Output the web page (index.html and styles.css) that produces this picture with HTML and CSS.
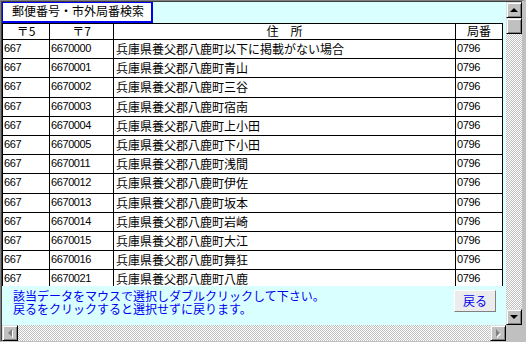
FILE: index.html
```html
<!DOCTYPE html>
<html lang="ja">
<head>
<meta charset="utf-8">
<title>郵便番号・市外局番検索</title>
<link rel="stylesheet" href="styles.css">
</head>
<body>
<div class="window">
  <div class="main">
    <div class="form">
      <div class="title">郵便番号・市外局番検索</div>
      <div class="list">
        <div class="row head">
          <div class="cell c">〒5</div><div class="cell c">〒7</div><div class="cell c">住　所</div><div class="cell c">局番</div>
        </div>
        <div class="row"><div class="cell num">667</div><div class="cell num">6670000</div><div class="cell">兵庫県養父郡八鹿町以下に掲載がない場合</div><div class="cell num">0796</div></div>
        <div class="row"><div class="cell num">667</div><div class="cell num">6670001</div><div class="cell">兵庫県養父郡八鹿町青山</div><div class="cell num">0796</div></div>
        <div class="row"><div class="cell num">667</div><div class="cell num">6670002</div><div class="cell">兵庫県養父郡八鹿町三谷</div><div class="cell num">0796</div></div>
        <div class="row"><div class="cell num">667</div><div class="cell num">6670003</div><div class="cell">兵庫県養父郡八鹿町宿南</div><div class="cell num">0796</div></div>
        <div class="row"><div class="cell num">667</div><div class="cell num">6670004</div><div class="cell">兵庫県養父郡八鹿町上小田</div><div class="cell num">0796</div></div>
        <div class="row"><div class="cell num">667</div><div class="cell num">6670005</div><div class="cell">兵庫県養父郡八鹿町下小田</div><div class="cell num">0796</div></div>
        <div class="row"><div class="cell num">667</div><div class="cell num">6670011</div><div class="cell">兵庫県養父郡八鹿町浅間</div><div class="cell num">0796</div></div>
        <div class="row"><div class="cell num">667</div><div class="cell num">6670012</div><div class="cell">兵庫県養父郡八鹿町伊佐</div><div class="cell num">0796</div></div>
        <div class="row"><div class="cell num">667</div><div class="cell num">6670013</div><div class="cell">兵庫県養父郡八鹿町坂本</div><div class="cell num">0796</div></div>
        <div class="row"><div class="cell num">667</div><div class="cell num">6670014</div><div class="cell">兵庫県養父郡八鹿町岩崎</div><div class="cell num">0796</div></div>
        <div class="row"><div class="cell num">667</div><div class="cell num">6670015</div><div class="cell">兵庫県養父郡八鹿町大江</div><div class="cell num">0796</div></div>
        <div class="row"><div class="cell num">667</div><div class="cell num">6670016</div><div class="cell">兵庫県養父郡八鹿町舞狂</div><div class="cell num">0796</div></div>
        <div class="row"><div class="cell num">667</div><div class="cell num">6670021</div><div class="cell">兵庫県養父郡八鹿町八鹿</div><div class="cell num">0796</div></div>
      </div>
      <div class="footer">
        <div class="msg">該当データをマウスで選択しダブルクリックして下さい。<br>戻るをクリックすると選択せずに戻ります。</div>
        <button class="back" type="button">戻る</button>
      </div>
    </div>
    <div class="vscroll">
      <div class="sbtn"><span class="tri up"></span></div>
      <div class="thumb"></div>
      <div class="track"></div>
      <div class="sbtn"><span class="tri down"></span></div>
    </div>
  </div>
  <div class="hbar">
    <div class="sbtn"><span class="tri left"></span></div>
    <div class="track"></div>
    <div class="sbtn"><span class="tri right"></span></div>
    <div class="corner"></div>
  </div>
</div>
</body>
</html>
```

FILE: styles.css
```css
* { box-sizing: border-box; }
html, body { margin: 0; padding: 0; }
body {
  width: 526px;
  height: 342px;
  overflow: hidden;
  background: #c0c0c0;
  font-family: "Noto Sans CJK JP", "Liberation Sans", sans-serif;
  font-size: 12px;
}
.window {
  width: 526px;
  height: 342px;
  display: flex;
  flex-direction: column;
  border-top: 1px solid #808080;
  border-left: 1px solid #808080;
  border-right: 4px solid #c0c0c0;
  border-bottom: 1px solid #c0c0c0;
  box-shadow: inset 1px 1px 0 #404040;
  padding: 1px 0 0 1px;
}
.main {
  display: flex;
  height: 323px;
}
.form {
  width: 504px;
  background: #daffff;
  display: flex;
  flex-direction: column;
  overflow: hidden;
}
.title {
  width: 151px;
  height: 21px;
  flex: none;
  background: #fff;
  border: 2px solid #0000f0;
  border-top-width: 1px;
  border-left-width: 1px;
  padding-left: 9px;
  line-height: 16px;
  font-size: 12px;
  color: #000;
}
.list {
  height: 263px;
  flex: none;
  overflow: hidden;
  color: #000;
}
.row {
  display: grid;
  grid-template-columns: 48px 64px 342px 47px;
  height: 19.2px;
  background: #fff;
  width: 501px;
}
.row.head { height: 17px; }
.cell {
  border-right: 1px solid #000;
  border-bottom: 1px solid #000;
  padding-left: 2px;
  line-height: 17px;
  white-space: nowrap;
  overflow: hidden;
}
.cell:first-child { border-left: 1px solid #000; }
.head .cell { border-top: 1px solid #000; line-height: 14px; }
.cell.c { text-align: center; padding-left: 0; }
.num {
  font-family: "Liberation Sans", sans-serif;
  font-size: 11px;
  letter-spacing: -0.4px;
  padding-left: 1px;
}
.footer {
  flex: 1;
  display: flex;
  justify-content: space-between;
  align-items: flex-start;
  padding: 3px 10px 0 11px;
}
.msg {
  color: #0000f0;
  line-height: 13px;
  font-size: 12px;
}
.back {
  width: 42px;
  height: 22px;
  margin: 1px 0 0;
  padding: 0;
  background: #ececec;
  border: 1px solid;
  border-color: #fff #808080 #808080 #fff;
  color: #0000f0;
  font-family: "Noto Sans CJK JP", sans-serif;
  font-size: 12px;
  line-height: 18px;
}
.vscroll {
  width: 16px;
  display: flex;
  flex-direction: column;
}
.sbtn, .thumb {
  width: 16px;
  height: 16px;
  flex: none;
  background: #c0c0c0;
  border: 1px solid;
  border-color: #dfdfdf #000 #000 #dfdfdf;
  box-shadow: inset 1px 1px 0 #fff, inset -1px -1px 0 #808080;
  display: flex;
  align-items: center;
  justify-content: center;
}
.track {
  flex: 1;
  background: repeating-conic-gradient(#c0c0c0 0 25%, #fff 0 50%) 0 0 / 2px 2px;
}
.tri { width: 0; height: 0; border: 4px solid transparent; }
.tri.up { border-bottom-color: #000; border-top-width: 0; }
.tri.down { border-top-color: #000; border-bottom-width: 0; }
.tri.left { border-right-color: #808080; border-left-width: 0; filter: drop-shadow(1px 1px 0 #fff); }
.tri.right { border-left-color: #808080; border-right-width: 0; filter: drop-shadow(1px 1px 0 #fff); }
.hbar {
  display: flex;
  height: 16px;
}
.corner {
  width: 16px;
  background: #c0c0c0;
}
```
